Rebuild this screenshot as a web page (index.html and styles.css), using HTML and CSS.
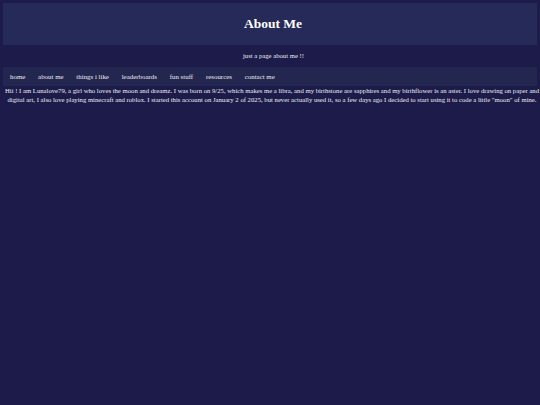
FILE: index.html
```html
<!DOCTYPE html>
<html>
<head>
<meta charset="utf-8">
<link rel="stylesheet" href="styles.css">
</head>
<body>
<header class="header"><h1 class="title">About Me</h1></header>
<p class="subtitle">just a page about me !!</p>
<nav class="nav">
  <a class="nav-link" href="#">home</a>
  <a class="nav-link" href="#">about me</a>
  <a class="nav-link" href="#">things i like</a>
  <a class="nav-link" href="#">leaderboards</a>
  <a class="nav-link" href="#">fun stuff</a>
  <a class="nav-link" href="#">resources</a>
  <a class="nav-link" href="#">contact me</a>
</nav>
<p class="intro">Hii ! I am Lunalove79, a girl who loves the moon and dreamz. I was born on 9/25, which makes me a libra, and my birthstone are sapphires and my birthflower is an aster. I love drawing on paper and digital art, I also love playing minecraft and roblox. I started this account on January 2 of 2025, but never actually used it, so a few days ago I decided to start using it to code a little "moon" of mine.</p>
</body>
</html>
```
FILE: styles.css
```css
html, body {
  margin: 0;
  padding: 0;
}
body {
  background: #1c1b4a;
  color: #ececf4;
  font-family: "Liberation Serif", "Times New Roman", serif;
  padding: 3px;
  width: 534px;
}
.header {
  background: #262a58;
  height: 42px;
  display: flex;
  align-items: center;
  justify-content: center;
}
.title {
  margin: 0 0 0 6px;
  font-size: 13.5px;
  font-weight: bold;
  color: #ffffff;
}
.subtitle {
  margin: 6px 0 0;
  padding-left: 7px;
  text-align: center;
  font-size: 6.7px;
  line-height: 9px;
}
.nav {
  margin-top: 7px;
  background: #23264f;
  height: 19px;
  display: flex;
  align-items: center;
  padding-left: 7px;
  gap: 12.8px;
}
.nav-link {
  color: #ececf4;
  text-decoration: none;
  font-size: 6.9px;
}
.intro {
  margin: 0 -6px 0 -2px;
  text-align: center;
  font-size: 6.7px;
  line-height: 9px;
}
```
